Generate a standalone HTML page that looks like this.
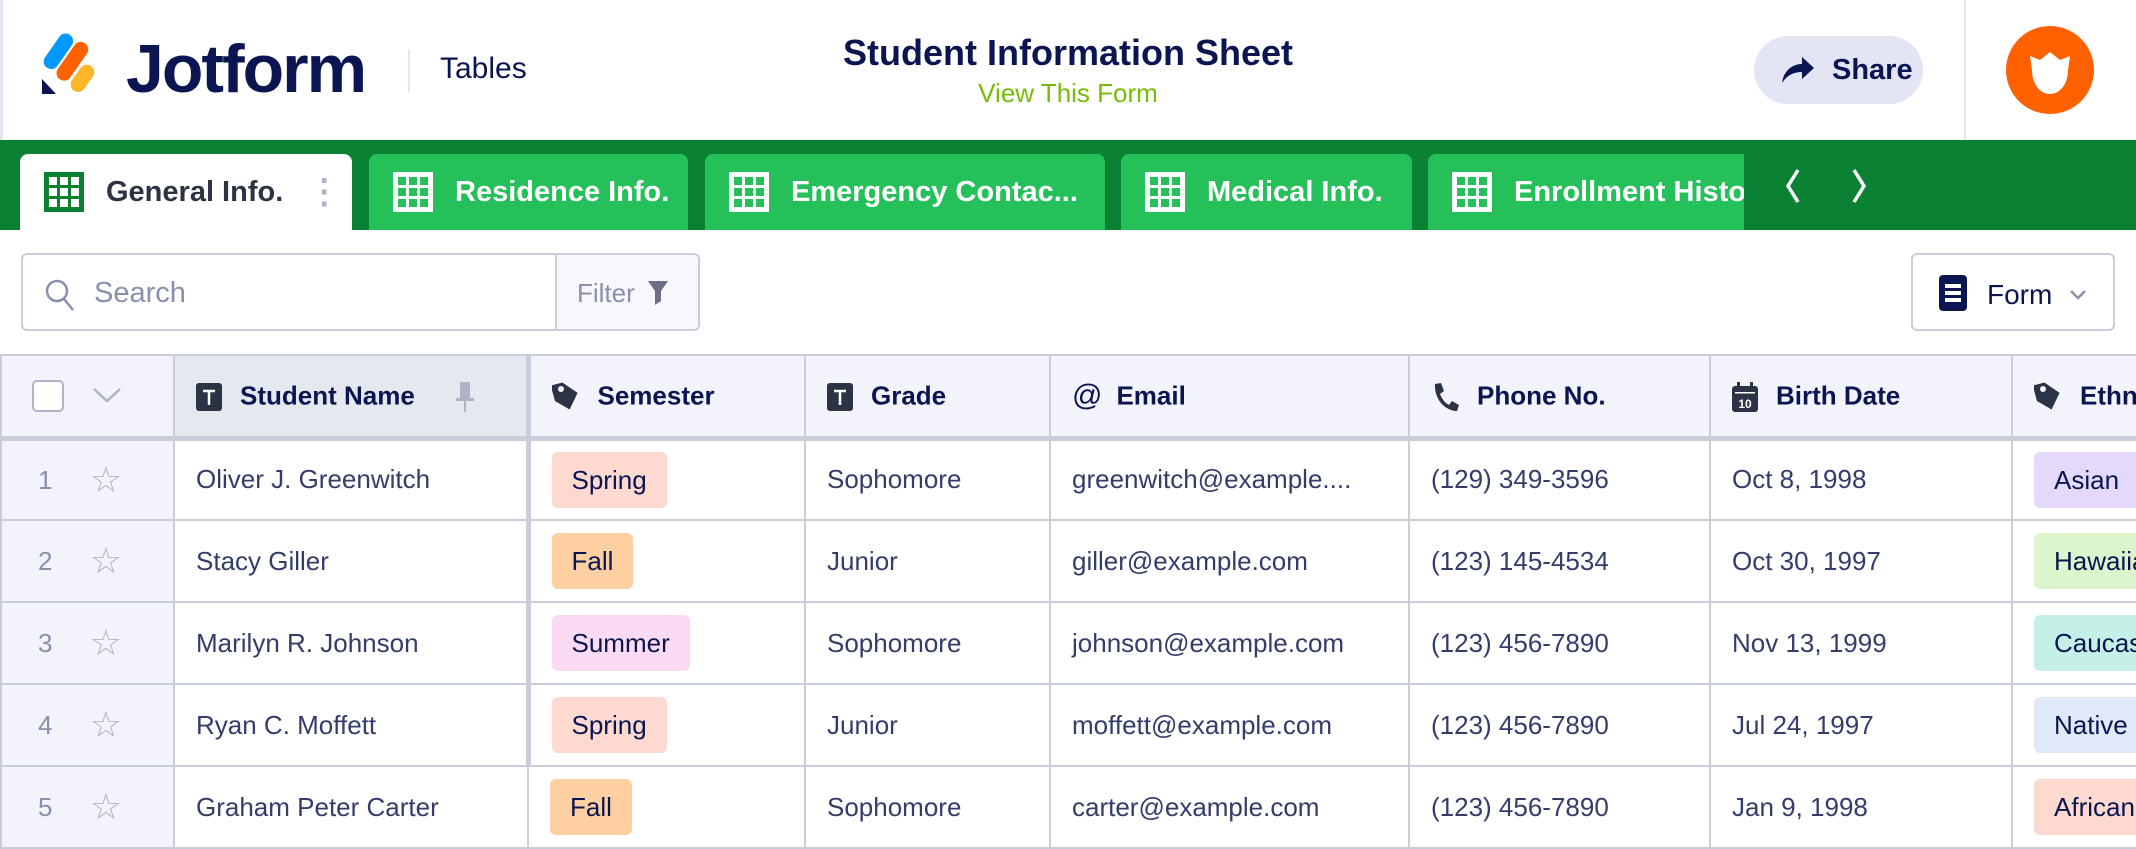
<!DOCTYPE html>
<html><head><meta charset="utf-8"><style>
*{box-sizing:border-box;margin:0;padding:0}
body{width:2136px;height:848px;overflow:hidden;background:#fff;font-family:"Liberation Sans",sans-serif;color:#0a1551;position:relative}
.abs{position:absolute}
.hdr{left:0;top:0;width:2136px;height:140px;background:#fff;border-left:3px solid #e3e5f0}
.green{left:0;top:140px;width:2136px;height:90px;background:#0b8133}
.tab{top:154px;height:76px;background:#25c05a;border-radius:8px 8px 0 0;color:#fff;font-size:29px;font-weight:bold;display:flex;align-items:center;padding-left:24px;overflow:hidden;white-space:nowrap}
.tab svg{margin-right:22px;flex:none}
.tab.act{background:#fff;color:#2c3345}
.grid{left:0;top:354px;width:2136px}
table{border-collapse:collapse;table-layout:fixed;width:2160px}
td,th{border:2px solid #c8ccdb;height:82px;font-size:26px;color:#343c6a;text-align:left;padding-left:21px;white-space:nowrap;overflow:hidden;font-weight:normal}
th{background:#f3f3fc;color:#0a1551;font-weight:bold;border-bottom:5px solid #c8ccdb;height:83px}
td.n{background:#f3f3fc;color:#8a8fae;padding-left:36px}
.tag{display:inline-block;padding:0 20px;height:56px;line-height:56px;border-radius:6px;color:#0a1551}
.ic{display:inline-block;vertical-align:middle;margin-right:18px}
th span{vertical-align:middle}
</style></head><body>
<div class="abs hdr"></div>
<svg class="abs" style="left:42px;top:33px" width="56" height="62" viewBox="0 0 56 62">
<rect x="9" y="-2" width="15" height="40" rx="7.5" fill="#0099ff" transform="rotate(35 16 18)"/>
<rect x="23" y="6" width="15" height="44" rx="7.5" fill="#ff6100" transform="rotate(35 30 28)"/>
<rect x="33" y="30" width="15" height="30" rx="7.5" fill="#ffb629" transform="rotate(35 40 45)"/>
<path d="M0 46 L0 61 L14 61 Z" fill="#0a1551"/>
</svg>
<div class="abs" style="left:126px;top:30px;font-size:68px;font-weight:bold;color:#0a1551;letter-spacing:-2px">Jotform</div>
<div class="abs" style="left:408px;top:50px;width:2px;height:42px;background:#e3e5f0"></div>
<div class="abs" style="left:440px;top:52px;font-size:30px;color:#0a1551">Tables</div>
<div class="abs" style="left:668px;top:32px;width:800px;text-align:center;font-size:36px;font-weight:bold;color:#0a1551">Student Information Sheet</div>
<div class="abs" style="left:668px;top:78px;width:800px;text-align:center;font-size:26px;color:#78bb07">View This Form</div>
<div class="abs" style="left:1754px;top:36px;width:169px;height:68px;border-radius:34px;background:#e3e5f5;font-size:29px;font-weight:bold;display:flex;align-items:center;padding-left:26px;color:#0a1551">
<svg width="36" height="30" viewBox="0 0 36 30" style="margin-right:16px"><path d="M2 28 C4 14 14 9 22 9 V2 L34 13 L22 24 V17 C14 17 7 20 2 28 Z" fill="#0a1551"/></svg>Share</div>
<div class="abs" style="left:1964px;top:0;width:2px;height:140px;background:#e3e5f0"></div>
<div class="abs" style="left:2006px;top:26px;width:88px;height:88px;border-radius:50%;background:#ff6100"></div>
<svg class="abs" style="left:2020px;top:42px" width="60" height="60" viewBox="0 0 60 60"><path d="M10 14 L20 18 L30 10 L40 18 L50 14 L48 28 C48 42 40 52 30 52 C20 52 12 42 12 28 Z" fill="#fff"/></svg>

<div class="abs green"></div>
<div class="abs tab act" style="left:20px;width:332px"><svg width="40" height="40" viewBox="0 0 40 40"><rect width="40" height="40" fill="#0b8133"/><g fill="#fff"><rect x="5" y="5" width="8" height="8"/><rect x="16" y="5" width="8" height="8"/><rect x="27" y="5" width="8" height="8"/><rect x="5" y="16" width="8" height="8"/><rect x="16" y="16" width="8" height="8"/><rect x="27" y="16" width="8" height="8"/><rect x="5" y="27" width="8" height="8"/><rect x="16" y="27" width="8" height="8"/><rect x="27" y="27" width="8" height="8"/></g></svg>General Info.<span style="margin-left:24px;color:#b0b3c8;font-size:34px;line-height:1">⋮</span></div>
<div class="abs tab" style="left:369px;width:319px"><svg width="40" height="40" viewBox="0 0 40 40"><rect width="40" height="40" fill="#fff"/><g fill="#25c05a"><rect x="5" y="5" width="8" height="8"/><rect x="16" y="5" width="8" height="8"/><rect x="27" y="5" width="8" height="8"/><rect x="5" y="16" width="8" height="8"/><rect x="16" y="16" width="8" height="8"/><rect x="27" y="16" width="8" height="8"/><rect x="5" y="27" width="8" height="8"/><rect x="16" y="27" width="8" height="8"/><rect x="27" y="27" width="8" height="8"/></g></svg>Residence Info.</div>
<div class="abs tab" style="left:705px;width:400px"><svg width="40" height="40" viewBox="0 0 40 40"><rect width="40" height="40" fill="#fff"/><g fill="#25c05a"><rect x="5" y="5" width="8" height="8"/><rect x="16" y="5" width="8" height="8"/><rect x="27" y="5" width="8" height="8"/><rect x="5" y="16" width="8" height="8"/><rect x="16" y="16" width="8" height="8"/><rect x="27" y="16" width="8" height="8"/><rect x="5" y="27" width="8" height="8"/><rect x="16" y="27" width="8" height="8"/><rect x="27" y="27" width="8" height="8"/></g></svg>Emergency Contac...</div>
<div class="abs tab" style="left:1121px;width:291px"><svg width="40" height="40" viewBox="0 0 40 40"><rect width="40" height="40" fill="#fff"/><g fill="#25c05a"><rect x="5" y="5" width="8" height="8"/><rect x="16" y="5" width="8" height="8"/><rect x="27" y="5" width="8" height="8"/><rect x="5" y="16" width="8" height="8"/><rect x="16" y="16" width="8" height="8"/><rect x="27" y="16" width="8" height="8"/><rect x="5" y="27" width="8" height="8"/><rect x="16" y="27" width="8" height="8"/><rect x="27" y="27" width="8" height="8"/></g></svg>Medical Info.</div>
<div class="abs tab" style="left:1428px;width:316px;border-radius:8px 0 0 0"><svg width="40" height="40" viewBox="0 0 40 40"><rect width="40" height="40" fill="#fff"/><g fill="#25c05a"><rect x="5" y="5" width="8" height="8"/><rect x="16" y="5" width="8" height="8"/><rect x="27" y="5" width="8" height="8"/><rect x="5" y="16" width="8" height="8"/><rect x="16" y="16" width="8" height="8"/><rect x="27" y="16" width="8" height="8"/><rect x="5" y="27" width="8" height="8"/><rect x="16" y="27" width="8" height="8"/><rect x="27" y="27" width="8" height="8"/></g></svg>Enrollment History</div>
<svg class="abs" style="left:1782px;top:168px" width="90" height="36" viewBox="0 0 90 36"><path d="M16 2 L6 18 L16 34" stroke="#fff" stroke-width="3.5" fill="none"/><path d="M72 2 L82 18 L72 34" stroke="#fff" stroke-width="3.5" fill="none"/></svg>

<div class="abs" style="left:21px;top:253px;width:679px;height:78px;border:2px solid #c8ccdb;border-radius:6px;overflow:hidden">
<svg class="abs" style="left:22px;top:24px" width="30" height="34" viewBox="0 0 30 34"><circle cx="12" cy="12" r="10" stroke="#8a8fae" stroke-width="2.5" fill="none"/><path d="M19 20 L28 31" stroke="#8a8fae" stroke-width="2.5"/></svg>
<div class="abs" style="left:71px;top:22px;font-size:29px;color:#8a8fae">Search</div>
<div class="abs" style="left:532px;top:0;width:147px;height:76px;border-left:2px solid #c8ccdb;background:#f8f8fc;font-size:26px;color:#8a8fae;padding:23px 0 0 20px">Filter <svg width="20" height="24" viewBox="0 0 20 24" style="vertical-align:-3px;margin-left:6px"><path d="M0 0 H20 L13 10 V20 L7 24 V10 Z" fill="#6c6f85"/></svg></div>
</div>
<div class="abs" style="left:1911px;top:253px;width:204px;height:78px;border:2px solid #c8ccdb;border-radius:6px;font-size:28px;color:#0a1551;padding:20px 0 0 26px">
<svg width="28" height="36" viewBox="0 0 28 36" style="vertical-align:-7px;margin-right:20px"><rect width="28" height="36" rx="4" fill="#0a1551"/><g fill="#fff"><rect x="6" y="9" width="16" height="4"/><rect x="6" y="16" width="16" height="4"/><rect x="6" y="23" width="16" height="4"/></g></svg>Form<svg width="16" height="10" viewBox="0 0 16 10" style="margin-left:18px;vertical-align:4px"><path d="M1 1 L8 8 L15 1" stroke="#8a8fae" stroke-width="2.5" fill="none"/></svg></div>

<div class="abs grid">
<table>
<colgroup><col style="width:173px"><col style="width:354px"><col style="width:277px"><col style="width:245px"><col style="width:359px"><col style="width:301px"><col style="width:302px"><col style="width:149px"></colgroup>
<tr>
<th style="padding-left:30px"><span style="display:inline-block;width:32px;height:32px;border:2.5px solid #b0b3c8;border-radius:5px;background:#fff;vertical-align:middle"></span><svg width="30" height="20" viewBox="0 0 30 20" style="vertical-align:middle;margin-left:28px"><path d="M2 3 L15 15 L28 3" stroke="#b0b3c8" stroke-width="2.5" fill="none"/></svg></th>
<th style="background:#e6e8f0;border-right:5px solid #c8ccdb"><svg class="ic" width="26" height="28" viewBox="0 0 26 28"><rect width="26" height="28" rx="3" fill="#2c3345"/><path d="M7 8 H19 M13 8 V22" stroke="#fff" stroke-width="2.5"/></svg><span>Student Name</span><svg width="20" height="30" viewBox="0 0 20 30" style="vertical-align:middle;margin-left:40px"><path d="M5 0 H15 V16 H19 V19 H11 V30 H9 V19 H1 V16 H5 Z" fill="#b0b3c8"/></svg></th>
<th><svg class="ic" width="28" height="32" viewBox="0 0 28 32"><path d="M2 2 H14 L26 16 L14 30 L2 18 Z" fill="#2c3345" transform="rotate(-15 14 16)"/><circle cx="9" cy="9" r="3" fill="#f3f3fc"/></svg><span>Semester</span></th>
<th><svg class="ic" width="26" height="28" viewBox="0 0 26 28"><rect width="26" height="28" rx="3" fill="#2c3345"/><path d="M7 8 H19 M13 8 V22" stroke="#fff" stroke-width="2.5"/></svg><span>Grade</span></th>
<th><span style="font-weight:normal;font-size:30px;margin-right:14px;vertical-align:middle">@</span><span>Email</span></th>
<th><svg class="ic" width="28" height="30" viewBox="0 0 28 30"><path d="M4 2 L10 1 L13 9 L9 12 C11 17 14 21 18 23 L21 19 L28 23 L26 29 C14 29 3 17 4 2 Z" fill="#2c3345"/></svg><span>Phone No.</span></th>
<th><svg class="ic" width="26" height="30" viewBox="0 0 26 30"><rect y="4" width="26" height="26" rx="3" fill="#2c3345"/><rect x="5" y="0" width="3" height="7" fill="#2c3345"/><rect x="18" y="0" width="3" height="7" fill="#2c3345"/><rect x="3" y="10" width="20" height="1.5" fill="#fff"/><text x="13" y="26" font-size="12" fill="#fff" text-anchor="middle" font-family="Liberation Sans">10</text></svg><span>Birth Date</span></th>
<th><svg class="ic" width="28" height="32" viewBox="0 0 28 32"><path d="M2 2 H14 L26 16 L14 30 L2 18 Z" fill="#2c3345" transform="rotate(-15 14 16)"/><circle cx="9" cy="9" r="3" fill="#f3f3fc"/></svg><span>Ethnicity</span></th>
</tr>
<tr><td class="n">1 <span style="margin-left:30px;color:#b0b3c8;font-size:36px;vertical-align:-3px">☆</span></td><td style="border-right:5px solid #c8ccdb">Oliver J. Greenwitch</td><td><span class="tag" style="background:#fdd9d0">Spring</span></td><td>Sophomore</td><td>greenwitch@example....</td><td>(129) 349-3596</td><td>Oct 8, 1998</td><td><span class="tag" style="background:#e4d9fb">Asian</span></td></tr>
<tr><td class="n">2 <span style="margin-left:30px;color:#b0b3c8;font-size:36px;vertical-align:-3px">☆</span></td><td style="border-right:5px solid #c8ccdb">Stacy Giller</td><td><span class="tag" style="background:#fecfa1">Fall</span></td><td>Junior</td><td>giller@example.com</td><td>(123) 145-4534</td><td>Oct 30, 1997</td><td><span class="tag" style="background:#ddf5cc">Hawaiian</span></td></tr>
<tr><td class="n">3 <span style="margin-left:30px;color:#b0b3c8;font-size:36px;vertical-align:-3px">☆</span></td><td style="border-right:5px solid #c8ccdb">Marilyn R. Johnson</td><td><span class="tag" style="background:#fbdaf3">Summer</span></td><td>Sophomore</td><td>johnson@example.com</td><td>(123) 456-7890</td><td>Nov 13, 1999</td><td><span class="tag" style="background:#c4f0e8">Caucasian</span></td></tr>
<tr><td class="n">4 <span style="margin-left:30px;color:#b0b3c8;font-size:36px;vertical-align:-3px">☆</span></td><td style="border-right:5px solid #c8ccdb">Ryan C. Moffett</td><td><span class="tag" style="background:#fdd9d0">Spring</span></td><td>Junior</td><td>moffett@example.com</td><td>(123) 456-7890</td><td>Jul 24, 1997</td><td><span class="tag" style="background:#dfe9f7">Native</span></td></tr>
<tr><td class="n">5 <span style="margin-left:30px;color:#b0b3c8;font-size:36px;vertical-align:-3px">☆</span></td><td>Graham Peter Carter</td><td><span class="tag" style="background:#fecfa1">Fall</span></td><td>Sophomore</td><td>carter@example.com</td><td>(123) 456-7890</td><td>Jan 9, 1998</td><td><span class="tag" style="background:#fdd9d0">African</span></td></tr>
</table>
</div>
</body></html>
